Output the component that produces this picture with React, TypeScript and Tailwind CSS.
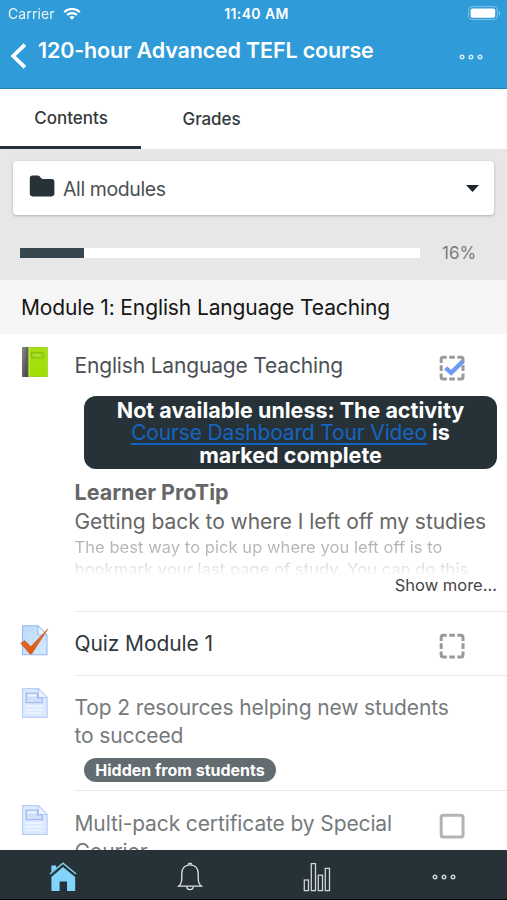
import type { ReactNode } from 'react';

function WifiIcon() {
  return (
    <svg width="18" height="13" viewBox="0 0 18 13" fill="none" stroke="white" strokeWidth="2.2">
      <path d="M1.2 4.1C5.6 -0.1 12.4 -0.1 16.8 4.1" />
      <path d="M4.1 7C6.9 4.4 11.1 4.4 13.9 7" />
      <path d="M6.4 9.1C7.9 7.7 10.1 7.7 11.6 9.1L9 11.8Z" fill="white" stroke="none" />
    </svg>
  );
}

function BatteryIcon() {
  return (
    <svg width="33" height="15" viewBox="0 0 33 15" fill="none">
      <rect x="0.6" y="0.6" width="28.8" height="13" rx="3.8" stroke="white" strokeOpacity="0.4" />
      <rect x="2.6" y="2.4" width="24.6" height="9.4" rx="2" fill="white" />
      <path d="M31 5.2V9.6C32.2 9 32.2 5.8 31 5.2Z" fill="white" fillOpacity="0.6" />
    </svg>
  );
}

function Dots() {
  return (
    <svg width="24" height="6" viewBox="0 0 24 6" fill="none" stroke="currentColor" strokeWidth="1.4">
      <circle cx="3" cy="3" r="1.8" />
      <circle cx="12" cy="3" r="1.8" />
      <circle cx="21" cy="3" r="1.8" />
    </svg>
  );
}

function BookIcon() {
  return (
    <svg width="26" height="30" viewBox="0 0 26 30">
      <defs>
        <linearGradient id="cover" x1="0" y1="0" x2="1" y2="1">
          <stop offset="0" stopColor="#aadf1c" />
          <stop offset="1" stopColor="#9de000" />
        </linearGradient>
        <linearGradient id="spine" x1="0" y1="0" x2="1" y2="1">
          <stop offset="0" stopColor="#8a8a8a" />
          <stop offset="1" stopColor="#3c3c3c" />
        </linearGradient>
      </defs>
      <rect x="0.3" y="0.3" width="25.4" height="29.4" rx="0.8" fill="url(#cover)" stroke="#86b516" strokeWidth="0.6" />
      <path d="M0.8 0H6.4V30H0.8C0.3 30 0 29.7 0 29.2V0.8C0 0.3 0.3 0 0.8 0Z" fill="url(#spine)" />
      <path d="M5.4 0.5V29.5" stroke="#5c5f50" strokeWidth="0.8" />
      <path d="M7.2 0.8V29.2" stroke="#c3e65a" strokeWidth="1" />
      <rect x="9.4" y="5.4" width="11.6" height="5.6" fill="#9fd51a" stroke="#88bc0f" strokeWidth="0.9" />
      <path d="M11.6 8.2H18.8" stroke="#c0e25c" strokeWidth="1.2" />
      <path d="M25 1V29" stroke="#b9e04a" strokeWidth="0.8" />
    </svg>
  );
}

function QuizIcon() {
  return (
    <svg width="30" height="32" viewBox="0 0 30 32">
      <defs>
        <linearGradient id="quizPaper" x1="0" y1="0" x2="1" y2="1">
          <stop offset="0" stopColor="#bddaf6" />
          <stop offset="1" stopColor="#d3eaff" />
        </linearGradient>
        <linearGradient id="tick" x1="0" y1="0" x2="0" y2="1">
          <stop offset="0" stopColor="#d9793c" />
          <stop offset="1" stopColor="#e2570c" />
        </linearGradient>
      </defs>
      <path d="M2.5 0.8H18L27 10V29.8H2.5Z" fill="url(#quizPaper)" stroke="#97b8f2" strokeWidth="1.1" />
      <path d="M18 0.8V10H27Z" fill="#eef6ff" stroke="#97b8f2" strokeWidth="1" />
      <path d="M0.8 18.2L4.8 15.6L10.8 21.6L28 3.8L11.6 29H10Z" fill="url(#tick)" stroke="#c5541c" strokeWidth="0.6" />
    </svg>
  );
}

function PageIcon() {
  return (
    <svg width="26" height="30" viewBox="0 0 26 30">
      <path d="M0.6 0.6H16.4L25.2 9.6V29.4H0.6Z" fill="#dceaff" stroke="#b9cffb" strokeWidth="1.2" />
      <path d="M16.4 0.6V9.6H25.2Z" fill="#eff5ff" stroke="#b0c6f7" strokeWidth="1" />
      <path d="M4.2 5.2H15.6V9.8H20.4V14.6H4.2Z" fill="#cfdffb" stroke="#a3bbf1" strokeWidth="1.3" />
      <path d="M5.6 7.4H14.4" stroke="#edf4ff" strokeWidth="2" />
      <path d="M6 12.6H11.5" stroke="#e2e8df" strokeWidth="1.4" />
      <path d="M4 18.2H21M4 21.6H21M4 25H19" stroke="#f3f8ff" strokeWidth="1.2" />
    </svg>
  );
}

function CompletionBox({ variant }: { variant: 'ticked' | 'dashed' | 'solid' }) {
  if (variant === 'solid') {
    return (
      <svg width="26" height="26" viewBox="-0.4 -0.4 26 26" fill="none">
        <rect x="1.8" y="1.8" width="21.8" height="21.8" rx="2" stroke="#b3b3b3" strokeWidth="3" />
      </svg>
    );
  }
  return (
    <svg width="26" height="26" viewBox="-0.4 -0.4 26 26" fill="none">
      <path
        d="M1.8 7.6V3.8C1.8 2.6 2.6 1.8 3.8 1.8H7.4M9.9 1.8H15.5M18 1.8H21.6C22.8 1.8 23.6 2.6 23.6 3.8V7.6M23.6 9.9V15.5M23.6 18V21.6C23.6 22.8 22.8 23.6 21.6 23.6H18M15.5 23.6H9.9M7.4 23.6H3.8C2.6 23.6 1.8 22.8 1.8 21.6V18M1.8 15.5V9.9"
        stroke="#9a9a9a"
        strokeWidth="3"
      />
      {variant === 'ticked' && <path d="M6.2 12.4L11.8 17.4L23.4 6" stroke="#6f9bee" strokeWidth="4.4" />}
    </svg>
  );
}

function HomeIcon() {
  return (
    <svg width="28" height="30" viewBox="0 0 28 30" fill="#81d4fa">
      <path d="M2.4 3.6H7.2V9L2.4 13Z" />
      <path d="M14 5L26.2 15V29H18V19.4H10.6V29H2.4V15Z" />
      <path d="M0.8 12.9L14 2.2L27.2 12.9" fill="none" stroke="#263238" strokeWidth="2.2" />
      <path d="M0.9 12L14 1.2L27.1 12" fill="none" stroke="#81d4fa" strokeWidth="1.5" />
    </svg>
  );
}

function BellIcon() {
  return (
    <svg width="26" height="30" viewBox="0 0 26 30" fill="none" stroke="#dfe3e4" strokeWidth="1.3">
      <path d="M1.5 24.2C4.2 22.4 4.8 20.4 4.8 16.5V11.5C4.8 6.2 8 2.8 13 2.8C18 2.8 21.2 6.2 21.2 11.5V16.5C21.2 20.4 21.8 22.4 24.5 24.2Z" />
      <path d="M11.2 2.6C11.4 0.6 14.6 0.6 14.8 2.6" />
      <path d="M9.8 25C10.2 28.6 15.8 28.6 16.2 25" />
    </svg>
  );
}

function StatsIcon() {
  return (
    <svg width="28" height="30" viewBox="0 0 28 30" fill="none" stroke="#cfd4d6" strokeWidth="1.3">
      <rect x="1.3" y="18" width="4.2" height="10.6" />
      <rect x="8.3" y="1.6" width="4.2" height="27" />
      <rect x="15.3" y="13.2" width="4.2" height="15.4" />
      <rect x="22.3" y="6.4" width="4.2" height="22.2" />
    </svg>
  );
}

function Row({ icon, children, className }: { icon: ReactNode; children: ReactNode; className: string }) {
  return (
    <div className={`flex shrink-0 ${className}`}>
      <div className="flex w-[74.5px] shrink-0 justify-start pl-[22px]">{icon}</div>
      <div className="h-full min-w-0 flex-1 border-b border-[#e6e6e6]">{children}</div>
    </div>
  );
}

export default function App() {
  return (
    <div className="flex h-[900px] w-[507px] flex-col overflow-hidden bg-white font-['Inter','Liberation_Sans',sans-serif] whitespace-nowrap">
      <header className="h-[89px] shrink-0 border-b border-[#2583bd] bg-[#2f9bd8] text-white">
        <div className="grid h-7 grid-cols-3 items-center pr-1.5 pl-2">
          <div className="flex items-center gap-2 text-[14px]">
            <span className="-mt-px tracking-[0.1px] opacity-90">Carrier</span>
            <WifiIcon />
          </div>
          <div className="-mt-px pl-1 text-center text-[14px] font-semibold tracking-[0.4px]">11:40 AM</div>
          <div className="-mt-px flex justify-end">
            <BatteryIcon />
          </div>
        </div>
        <div className="flex pl-2.5">
          <svg className="mt-[15px]" width="18" height="26" viewBox="0 0 18 26" fill="none" stroke="white" strokeWidth="3.8">
            <path d="M15 1.6L3.2 13L15 24.4" />
          </svg>
          <h1 className="ml-2.5 pt-2 text-[21.5px] leading-7 font-semibold tracking-[-0.16px]">
            120-hour Advanced TEFL course
          </h1>
          <div className="mt-[26px] mr-6 ml-auto text-white/80">
            <Dots />
          </div>
        </div>
      </header>

      <nav className="flex h-[60px] shrink-0 text-[17px] font-medium text-[#333a3e]">
        <div className="flex w-[141px] justify-center border-b-[3px] border-[#263238] pl-px leading-[59px]">
          <span>Contents</span>
        </div>
        <div className="flex w-[141px] justify-center leading-[60px] tracking-[-0.1px]">Grades</div>
      </nav>

      <section className="h-[131px] shrink-0 bg-[#e7e7e7] pt-3">
        <div className="mx-[13px] flex h-[54px] items-center rounded bg-white pr-[15px] pl-4 shadow-[0_1px_3px_rgba(0,0,0,0.25)]">
          <svg className="mb-1" width="26" height="22" viewBox="0 0 26 22" fill="#263238">
            <path d="M3.6 0.6H8.6C10.4 0.6 11 1.6 11.6 2.6C12.2 3.6 12.8 4 14 4H22.6C24.4 4 25.4 5 25.4 6.8V18.6C25.4 20.4 24.4 21.4 22.6 21.4H3.6C1.8 21.4 0.8 20.4 0.8 18.6V3.4C0.8 1.6 1.8 0.6 3.6 0.6Z" />
          </svg>
          <span className="mt-[3px] ml-2 text-[19.5px] tracking-[-0.4px] text-[#4a4f52]">All modules</span>
          <svg className="ml-auto" width="13" height="7" viewBox="0 0 13 7" fill="#1d272b">
            <path d="M0 0H13L6.5 7Z" />
          </svg>
        </div>
        <div className="mt-[26px] flex items-center pl-5">
          <div className="h-2.5 w-[400px] bg-white">
            <div className="h-full w-[16%] bg-[#37474f]" />
          </div>
          <span className="ml-[22px] text-[17px] leading-6 text-[#7a7a7a]">16%</span>
        </div>
      </section>

      <h2 className="h-[54px] shrink-0 bg-[#f5f5f5] pl-[21px] text-[21px] leading-[55px] tracking-[-0.12px] text-[#161616]">
        Module 1: English Language Teaching
      </h2>

      <main className="flex h-[516px] shrink-0 flex-col overflow-hidden">
        <Row className="h-[278px] pt-3.5" icon={<div className="-mt-px"><BookIcon /></div>}>
          <div className="flex justify-between pr-[42px]">
            <span className="text-[21px] leading-[35px] tracking-[-0.17px] text-[#4a5156]">English Language Teaching</span>
            <div className="mt-[7px]">
              <CompletionBox variant="ticked" />
            </div>
          </div>
          <div className="mt-[13px] mr-2.5 ml-[9.5px] flex h-[73px] flex-col rounded-xl bg-[#263238] pt-[3px] text-center text-[21.5px] leading-[22px] font-bold text-white">
            <span>Not available unless: The activity</span>
            <span>
              <a className="text-[21px] font-normal tracking-[-0.15px] text-[#1565c0] underline decoration-[1.5px] underline-offset-3">
                Course Dashboard Tour Video
              </a>{' '}
              is
            </span>
            <span>marked complete</span>
          </div>
          <div className="mt-2 h-[98px] overflow-hidden text-[#666]">
            <h3 className="text-[21.5px] leading-[30px] font-bold">Learner ProTip</h3>
            <p className="text-[21px] leading-[30px] tracking-[-0.05px]">Getting back to where I left off my studies</p>
            <div className="-mt-px text-[16.5px] leading-[22px] tracking-[0.06px] [mask-image:linear-gradient(rgba(0,0,0,0.55),rgba(0,0,0,0.42)_50%,rgba(0,0,0,0.3)_65%,transparent)]">
              <p>The best way to pick up where you left off is to</p>
              <p className="h-[18px]">bookmark your last page of study. You can do this</p>
            </div>
          </div>
          <div className="-mt-0.5 pr-2.5 text-right text-[16.5px] leading-6 text-[#454545]">Show more...</div>
        </Row>

        <Row className="h-16 pt-3" icon={<div className="-ml-0.5 mt-px"><QuizIcon /></div>}>
          <div className="flex justify-between pr-[42px]">
            <span className="text-[21px] leading-10 tracking-[-0.1px] text-[#30383c]">Quiz Module 1</span>
            <div className="mt-[9px]">
              <CompletionBox variant="dashed" />
            </div>
          </div>
        </Row>

        <Row className="h-[115px] pt-3" icon={<PageIcon />}>
          <div className="pt-1.5 text-[21px] leading-7 tracking-[-0.12px] text-[#757a7c]">
            <p>Top 2 resources helping new students</p>
            <p>to succeed</p>
          </div>
          <span className="mt-2 ml-[9.5px] block h-6 w-[192px] rounded-full bg-[#636c70] text-center text-[16px] leading-6 font-bold text-white">
            Hidden from students
          </span>
        </Row>

        <Row className="h-[115px] pt-3.5" icon={<PageIcon />}>
          <div className="flex justify-between pr-[42px]">
            <div className="pt-[5px] text-[21px] leading-7 tracking-[-0.12px] text-[#757a7c]">
              <p>Multi-pack certificate by Special</p>
              <p>Courier</p>
            </div>
            <div className="mt-2">
              <CompletionBox variant="solid" />
            </div>
          </div>
        </Row>
      </main>

      <footer className="grid h-[50px] shrink-0 grid-cols-4 items-center justify-items-center border-b border-black bg-[#263238] pt-1 text-[#cfd4d6]">
        <HomeIcon />
        <BellIcon />
        <StatsIcon />
        <Dots />
      </footer>
    </div>
  );
}
